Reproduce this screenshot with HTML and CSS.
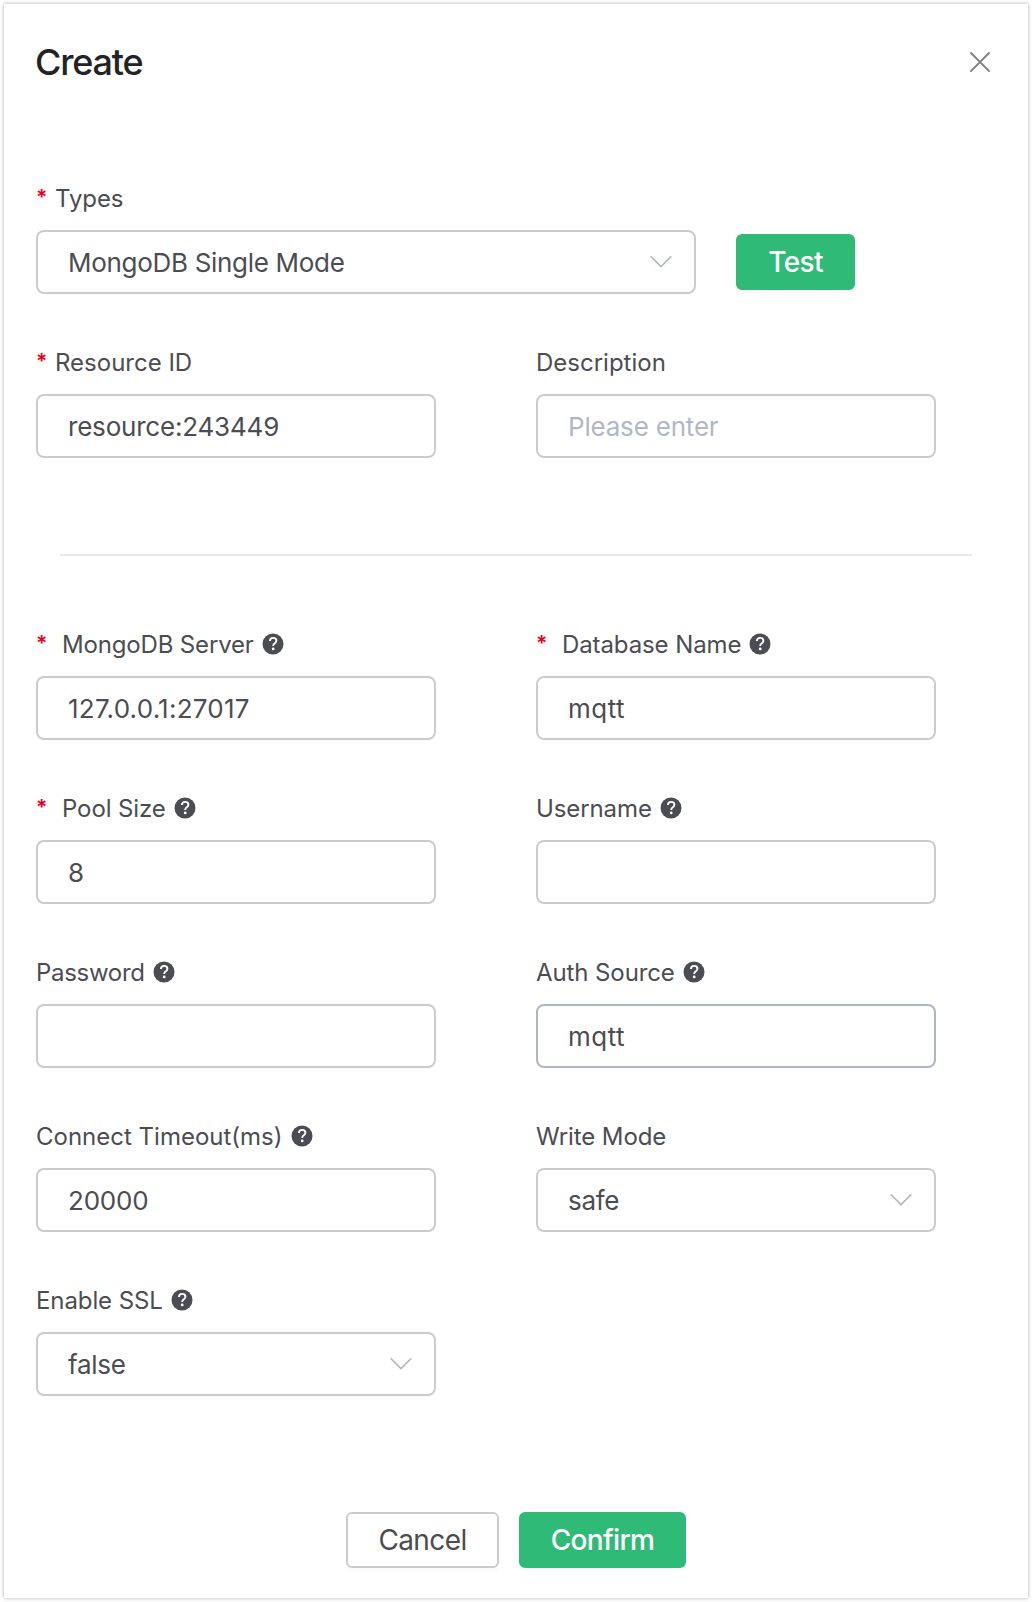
FILE: index.html
```html
<!DOCTYPE html>
<html lang="en">
<head>
<meta charset="utf-8">
<title>Create</title>
<link rel="stylesheet" href="styles.css">
</head>
<body>
<svg class="sprite" aria-hidden="true">
  <symbol id="help" viewBox="0 0 22 22">
    <circle cx="11" cy="11" r="10.5" fill="currentColor"/>
    <path d="M7.9 8C8 6.1 9.3 4.9 11.2 4.9C13.1 4.9 14.4 6 14.4 7.7C14.4 9 13.7 9.6 12.8 10.3C11.6 11.1 11.2 11.5 11.2 12.9" fill="none" stroke="#fff" stroke-width="1.9"/>
    <circle cx="11.2" cy="15.9" r="1.4" fill="#fff"/>
  </symbol>
  <symbol id="chevron" viewBox="0 0 22 12">
    <path d="M1.2 .9L11 10.6L20.8 .9" fill="none" stroke="currentColor" stroke-width="1.5" stroke-linecap="round" stroke-linejoin="round"/>
  </symbol>
</svg>
<main class="dialog">
  <header class="header">
    <h1 class="title">Create</h1>
    <svg class="close" viewBox="0 0 20 20"><path d="M1 1L19 19M19 1L1 19" fill="none" stroke="currentColor" stroke-width="1.8" stroke-linecap="round"/></svg>
  </header>

  <form class="form">
    <div class="type-row">
      <div class="field field-wide">
        <div class="label"><span class="star">*</span><span class="name">Types</span></div>
        <div class="control"><span class="value mode">MongoDB Single Mode</span><svg class="chevron"><use href="#chevron"/></svg></div>
      </div>
      <button type="button" class="button primary test">Test</button>
    </div>

    <div class="grid">
      <div class="field">
        <div class="label"><span class="star">*</span><span class="name exact">Resource ID</span></div>
        <div class="control"><span class="value">resource:243449</span></div>
      </div>
      <div class="field">
        <div class="label"><span class="name exact">Description</span></div>
        <div class="control"><span class="value placeholder">Please enter</span></div>
      </div>
    </div>

    <hr class="divider">

    <div class="grid">
      <div class="field">
        <div class="label spaced"><span class="star">*</span><span class="name server-name">MongoDB Server</span><svg class="help"><use href="#help"/></svg></div>
        <div class="control"><span class="value address">127.0.0.1:27017</span></div>
      </div>
      <div class="field">
        <div class="label spaced"><span class="star">*</span><span class="name">Database Name</span><svg class="help"><use href="#help"/></svg></div>
        <div class="control"><span class="value source">mqtt</span></div>
      </div>
      <div class="field">
        <div class="label spaced"><span class="star">*</span><span class="name">Pool Size</span><svg class="help"><use href="#help"/></svg></div>
        <div class="control"><span class="value">8</span></div>
      </div>
      <div class="field">
        <div class="label"><span class="name">Username</span><svg class="help"><use href="#help"/></svg></div>
        <div class="control"></div>
      </div>
      <div class="field">
        <div class="label"><span class="name password-name">Password</span><svg class="help"><use href="#help"/></svg></div>
        <div class="control"></div>
      </div>
      <div class="field">
        <div class="label"><span class="name">Auth Source</span><svg class="help"><use href="#help"/></svg></div>
        <div class="control hovered"><span class="value source">mqtt</span></div>
      </div>
      <div class="field">
        <div class="label"><span class="name exact">Connect Timeout(ms)</span><svg class="help"><use href="#help"/></svg></div>
        <div class="control"><span class="value">20000</span></div>
      </div>
      <div class="field">
        <div class="label"><span class="name">Write Mode</span></div>
        <div class="control"><span class="value mode">safe</span><svg class="chevron"><use href="#chevron"/></svg></div>
      </div>
      <div class="field">
        <div class="label"><span class="name">Enable SSL</span><svg class="help"><use href="#help"/></svg></div>
        <div class="control"><span class="value mode">false</span><svg class="chevron"><use href="#chevron"/></svg></div>
      </div>
    </div>
  </form>

  <footer class="footer">
    <button type="button" class="button cancel">Cancel</button>
    <button type="button" class="button primary confirm">Confirm</button>
  </footer>
</main>
</body>
</html>
```
FILE: styles.css
```css
* { box-sizing: border-box; }
body {
  margin: 0;
  padding: 4px;
  background: #fff;
  color: #4c4d52;
  font-family: Inter, "Liberation Sans", sans-serif;
}
.sprite { display: none; }
.dialog {
  height: 1594px;
  width: 1024px;
  padding: 0 32px;
  background: #fff;
  box-shadow: 0 0 4px rgba(0, 0, 0, .32);
}
.header {
  display: flex;
  align-items: center;
  justify-content: space-between;
  height: 116px;
  padding-right: 6px;
}
.title {
  margin: 0 0 0 -1px;
  color: #222325;
  font-size: 36px;
  font-weight: 450;
  letter-spacing: -1.2px;
}
.close { width: 20px; height: 20px; color: #808288; }
.form { padding-top: 58px; }
.type-row { display: flex; align-items: flex-end; gap: 40px; margin-bottom: 48px; }
.field { width: 400px; }
.field-wide { width: 660px; }
.grid { display: grid; grid-template-columns: 400px 400px; gap: 48px 100px; }
.label {
  display: flex;
  align-items: center;
  height: 40px;
  margin-bottom: 12px;
  font-size: 24px;
  line-height: 40px;
  white-space: nowrap;
}
.name { padding-top: 2px; line-height: 38px; letter-spacing: -.1px; }
.exact { letter-spacing: 0; }
.server-name { letter-spacing: -.16px; }
.password-name { letter-spacing: -.3px; }
.star { width: 19px; padding-bottom: 1px; color: #e60021; font-size: 21px; font-weight: 600; line-height: 39px; }
.spaced .star { width: 26px; }
.help { width: 22px; height: 22px; margin-left: 8px; }
.control {
  display: flex;
  align-items: center;
  justify-content: space-between;
  height: 64px;
  padding: 0 22px 0 30px;
  border: 2px solid #ccc;
  border-radius: 8px;
  background: #fff;
  font-size: 26px;
  white-space: nowrap;
}
.value { letter-spacing: -.2px; }
.mode { letter-spacing: -.3px; }
.address { letter-spacing: .23px; }
.source { letter-spacing: .5px; }
.hovered { border-color: #b0b4c3; }
.placeholder { color: #b2b7c5; }
.chevron { width: 22px; height: 12px; color: #b2b7c5; }
.divider { width: 912px; height: 2px; margin: 96px 0 68px 24px; border: 0; background: #e7e7ed; }
.button {
  height: 56px;
  padding: 0;
  border: 2px solid #ccc;
  border-radius: 6px;
  background: #fff;
  box-shadow: 0 4px 0 rgba(0, 0, 0, .016);
  color: #4c4d52;
  font: 400 28px/52px Inter, "Liberation Sans", sans-serif;
  letter-spacing: -.6px;
}
.primary { border-color: #30ba78; background: #30ba78; color: #fff; font-weight: 450; letter-spacing: -.65px; }
.test { width: 119px; margin-bottom: 4px; }
.footer { display: flex; justify-content: center; gap: 20px; margin: 116px 0 0; }
.cancel { width: 153px; }
.confirm { width: 167px; }
```
